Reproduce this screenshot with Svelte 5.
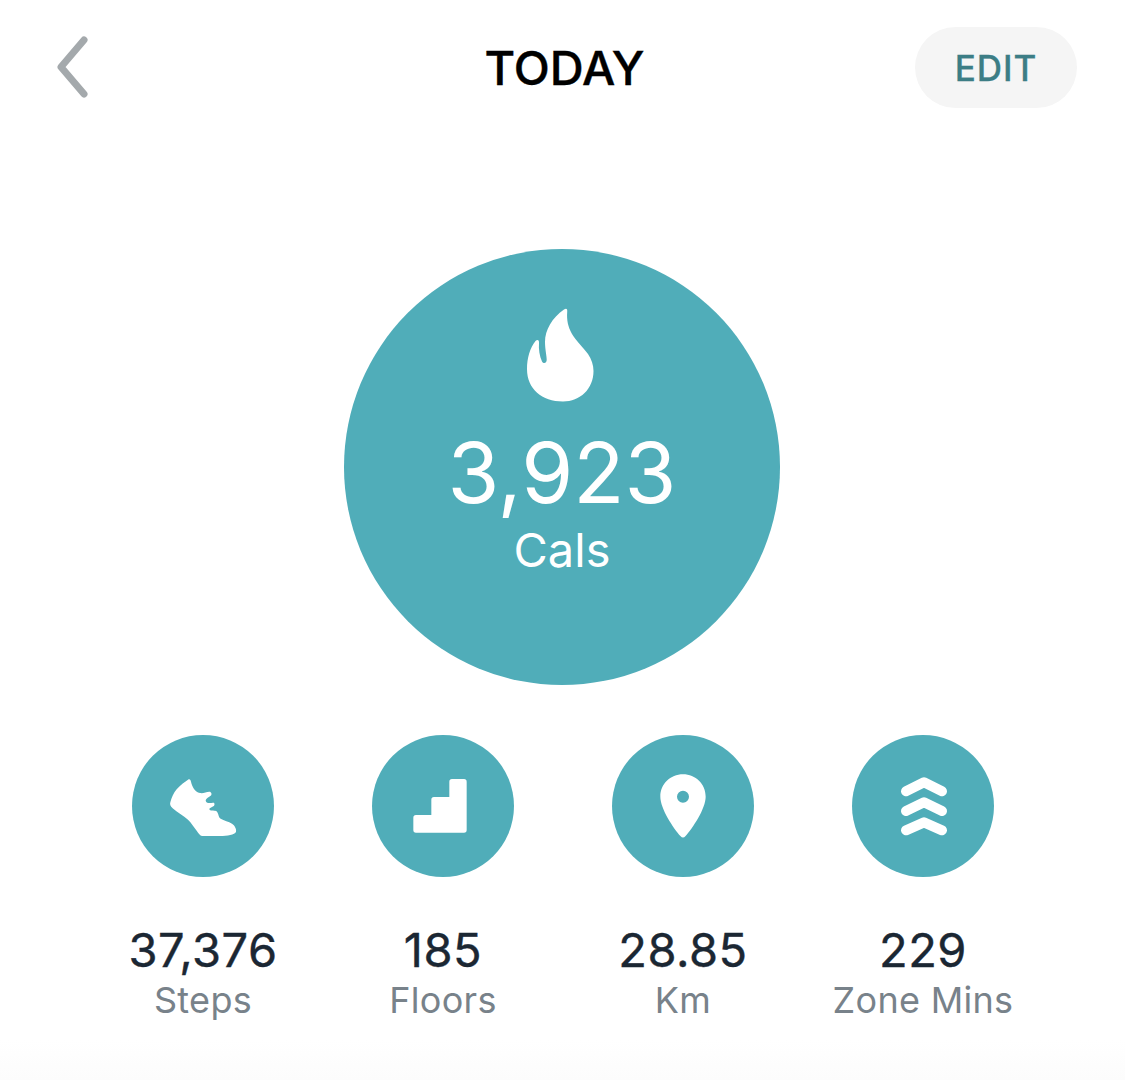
<script>
  const stats = [
    { key: 'steps', value: '37,376', label: 'Steps' },
    { key: 'floors', value: '185', label: 'Floors' },
    { key: 'km', value: '28.85', label: 'Km' },
    { key: 'zone', value: '229', label: 'Zone Mins' }
  ];
</script>

<main>
  <header>
    <button class="back" aria-label="Back">
      <svg width="40" height="68" viewBox="0 0 40 68">
        <path d="M32 6 L9 33 L32 60" />
      </svg>
    </button>
    <h1>TODAY</h1>
    <button class="edit">EDIT</button>
  </header>

  <section class="hero">
    <div class="big">
      <svg class="flame" width="80" height="105" viewBox="0 0 80 105">
        <path d="M44 8.5 C46.5 6.8 47.6 8 47.2 11 C46.6 19 48 26 52 33 C56 40 63 46 68 53 C71.5 58 73.5 64 73.5 70 C73.5 88 60 100.5 43 100.5 C22 100.5 7 88 7 68 C7 57 10 47 15.5 40 C17.5 38 19.3 39 19 42 C18.5 48 19.5 55 22 60.5 C23.5 63 26.5 62.5 26.7 59 C26.8 55 25 48 25 41 C25 29 32 17 44 8.5 Z" />
      </svg>
      <div class="big-value">3,923</div>
      <div class="big-label">Cals</div>
    </div>
  </section>

  <section class="stats">
    {#each stats as s}
      <div class="stat">
        <div class="circle">
          <svg width="142" height="142" viewBox="36 30 426 426">
            {#if s.key === 'steps'}
              <path d="M206 163 C210 162 212 165 213 170 C216 184 224 200 240 204 C250 206 258 201 268 200 C274 200 277 208 272 212 C267 216 258 219 257 226 C257 236 270 235 279 233 C285 232 285 241 280 244 C275 247 268 249 268 253 C269 259 282 256 288 258 C296 261 294 276 302 281 C312 287 326 289 336 296 C344 301 350 312 348 320 C344 330 322 332 300 333 L246 333 C240 332 236 325 230 317 C222 306 214 294 204 284 C190 272 172 262 158 250 C151 244 149 238 151 232 C155 218 160 204 170 193 C180 181 194 171 206 163 Z" />
            {:else if s.key === 'floors'}
              <path d="M276 162 H312 Q320 162 320 170 V315 Q320 323 312 323 H168 Q160 323 160 315 V278 Q160 270 168 270 H214 V224 Q214 216 222 216 H268 V170 Q268 162 276 162 Z" />
            {:else if s.key === 'km'}
              <path fill-rule="evenodd" d="M249 148 C287 148 317 177 317 215 C317 251 278 309 256 334 C252 339 246 339 242 334 C220 309 181 251 181 215 C181 177 211 148 249 148 Z M249 197 A18 18 0 1 0 249 233 A18 18 0 1 0 249 197 Z" />
            {:else}
              <g class="chev">
                <path d="M198 199 L252 172 L306 199" />
                <path d="M198 258 L252 232 L306 258" />
                <path d="M198 316 L252 292 L306 316" />
              </g>
            {/if}
          </svg>
        </div>
        <div class="value">{s.value}</div>
        <div class="label">{s.label}</div>
      </div>
    {/each}
  </section>
</main>

<style>
  :global(body) {
    background: linear-gradient(#fff 1040px, #fcfcfc 1080px);
  }

  main {
    width: 1125px;
    height: 1080px;
    font-family: Inter, "Liberation Sans", sans-serif;
    overflow: hidden;
  }

  header {
    display: grid;
    grid-template-columns: 1fr auto 1fr;
    align-items: center;
    padding: 27px 48px 0 52px;
  }

  button {
    border: 0;
    padding: 0;
    background: none;
    font-family: inherit;
  }

  .back {
    justify-self: start;
    width: 40px;
    height: 68px;
  }

  .back svg {
    display: block;
    fill: none;
    stroke: #a4a9ac;
    stroke-width: 7;
    stroke-linecap: round;
    stroke-linejoin: round;
  }

  h1 {
    margin: 0;
    font-size: 47px;
    font-weight: 500;
    line-height: 81px;
    color: #000;
    -webkit-text-stroke: 0.4px #000;
  }

  .edit {
    justify-self: end;
    width: 162px;
    height: 81px;
    border-radius: 41px;
    background: #f5f5f5;
    color: #3c7d85;
    font-size: 35px;
    font-weight: 500;
    letter-spacing: 1px;
    -webkit-text-stroke: 0.3px #3c7d85;
  }

  .hero {
    display: flex;
    justify-content: center;
    padding: 141px 1px 0 0;
  }

  .big {
    width: 436px;
    height: 436px;
    border-radius: 50%;
    background: #50adb9;
    color: #fff;
    display: flex;
    flex-direction: column;
    align-items: center;
    text-align: center;
  }

  .flame {
    display: block;
    margin: 52px 0 0 -4px;
    fill: #fff;
  }

  .big-value {
    font-size: 84px;
    line-height: 96px;
    margin-top: 19px;
  }

  .big-label {
    font-size: 47px;
    line-height: 54px;
    margin-top: 2px;
  }

  .stats {
    display: grid;
    grid-template-columns: repeat(4, 240px);
    justify-content: center;
    padding-top: 50px;
    margin-left: 1px;
  }

  .stat {
    display: flex;
    flex-direction: column;
    align-items: center;
  }

  .circle {
    width: 142px;
    height: 142px;
    border-radius: 50%;
    background: #50adb9;
  }

  .circle svg {
    display: block;
    fill: #fff;
  }

  .chev path {
    fill: none;
    stroke: #fff;
    stroke-width: 30;
    stroke-linecap: round;
    stroke-linejoin: round;
  }

  .value {
    margin-top: 46px;
    font-size: 47px;
    line-height: 54px;
    letter-spacing: 0.5px;
    color: #1b2733;
    -webkit-text-stroke: 0.4px #1b2733;
  }

  .label {
    font-size: 36px;
    line-height: 44px;
    margin-top: 1px;
    letter-spacing: 0.3px;
    color: #78828a;
  }
</style>
